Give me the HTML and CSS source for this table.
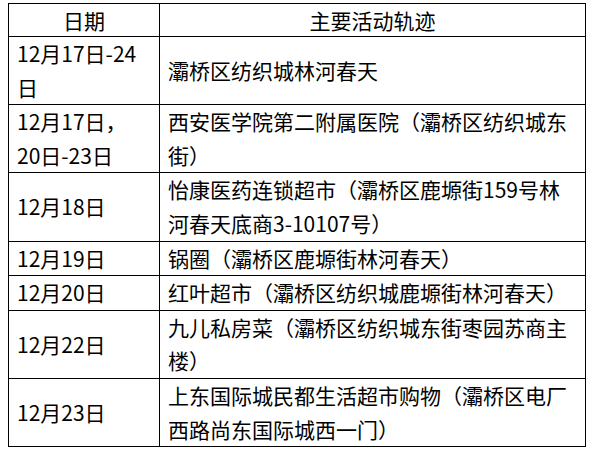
FILE: index.html
```html
<!DOCTYPE html>
<html lang="zh-CN">
<head>
<meta charset="utf-8">
<title>主要活动轨迹</title>
<link rel="stylesheet" href="styles.css">
</head>
<body>
<table class="trace">
  <colgroup>
    <col class="col-date">
    <col class="col-place">
  </colgroup>
  <thead>
    <tr class="head">
      <th>日期</th>
      <th>主要活动轨迹</th>
    </tr>
  </thead>
  <tbody>
    <tr><td>12月17日-24日</td><td>灞桥区纺织城林河春天</td></tr>
    <tr><td>12月17日，<span class="nowrap">20日-23日</span></td><td>西安医学院第二附属医院（灞桥区纺织城东街）</td></tr>
    <tr><td>12月18日</td><td>怡康医药连锁超市（灞桥区鹿塬街159号林河春天底商3-10107号）</td></tr>
    <tr><td>12月19日</td><td>锅圈（灞桥区鹿塬街林河春天）</td></tr>
    <tr><td>12月20日</td><td>红叶超市（灞桥区纺织城鹿塬街林河春天）</td></tr>
    <tr><td>12月22日</td><td>九儿私房菜（灞桥区纺织城东街枣园苏商主楼）</td></tr>
    <tr><td>12月23日</td><td>上东国际城民都生活超市购物（灞桥区电厂西路尚东国际城西一门）</td></tr>
  </tbody>
</table>
</body>
</html>
```

FILE: styles.css
```css
html, body {
  margin: 0;
  padding: 0;
  background: #ffffff;
}

body {
  padding: 3px 8px 0 8px;
  font-family: "Noto Sans CJK SC", "Noto Sans", sans-serif;
  font-size: 21px;
  color: #000000;
}

.trace {
  width: 578px;
  border-collapse: collapse;
  table-layout: fixed;
}

.col-date {
  width: 151px;
}

.trace th,
.trace td {
  border: 1px solid #000000;
  padding: 0 8px;
  line-height: 33.6px;
  vertical-align: middle;
  text-align: left;
  font-weight: normal;
}

.trace th {
  text-align: center;
  line-height: 32px;
}

.nowrap {
  white-space: nowrap;
}
```
